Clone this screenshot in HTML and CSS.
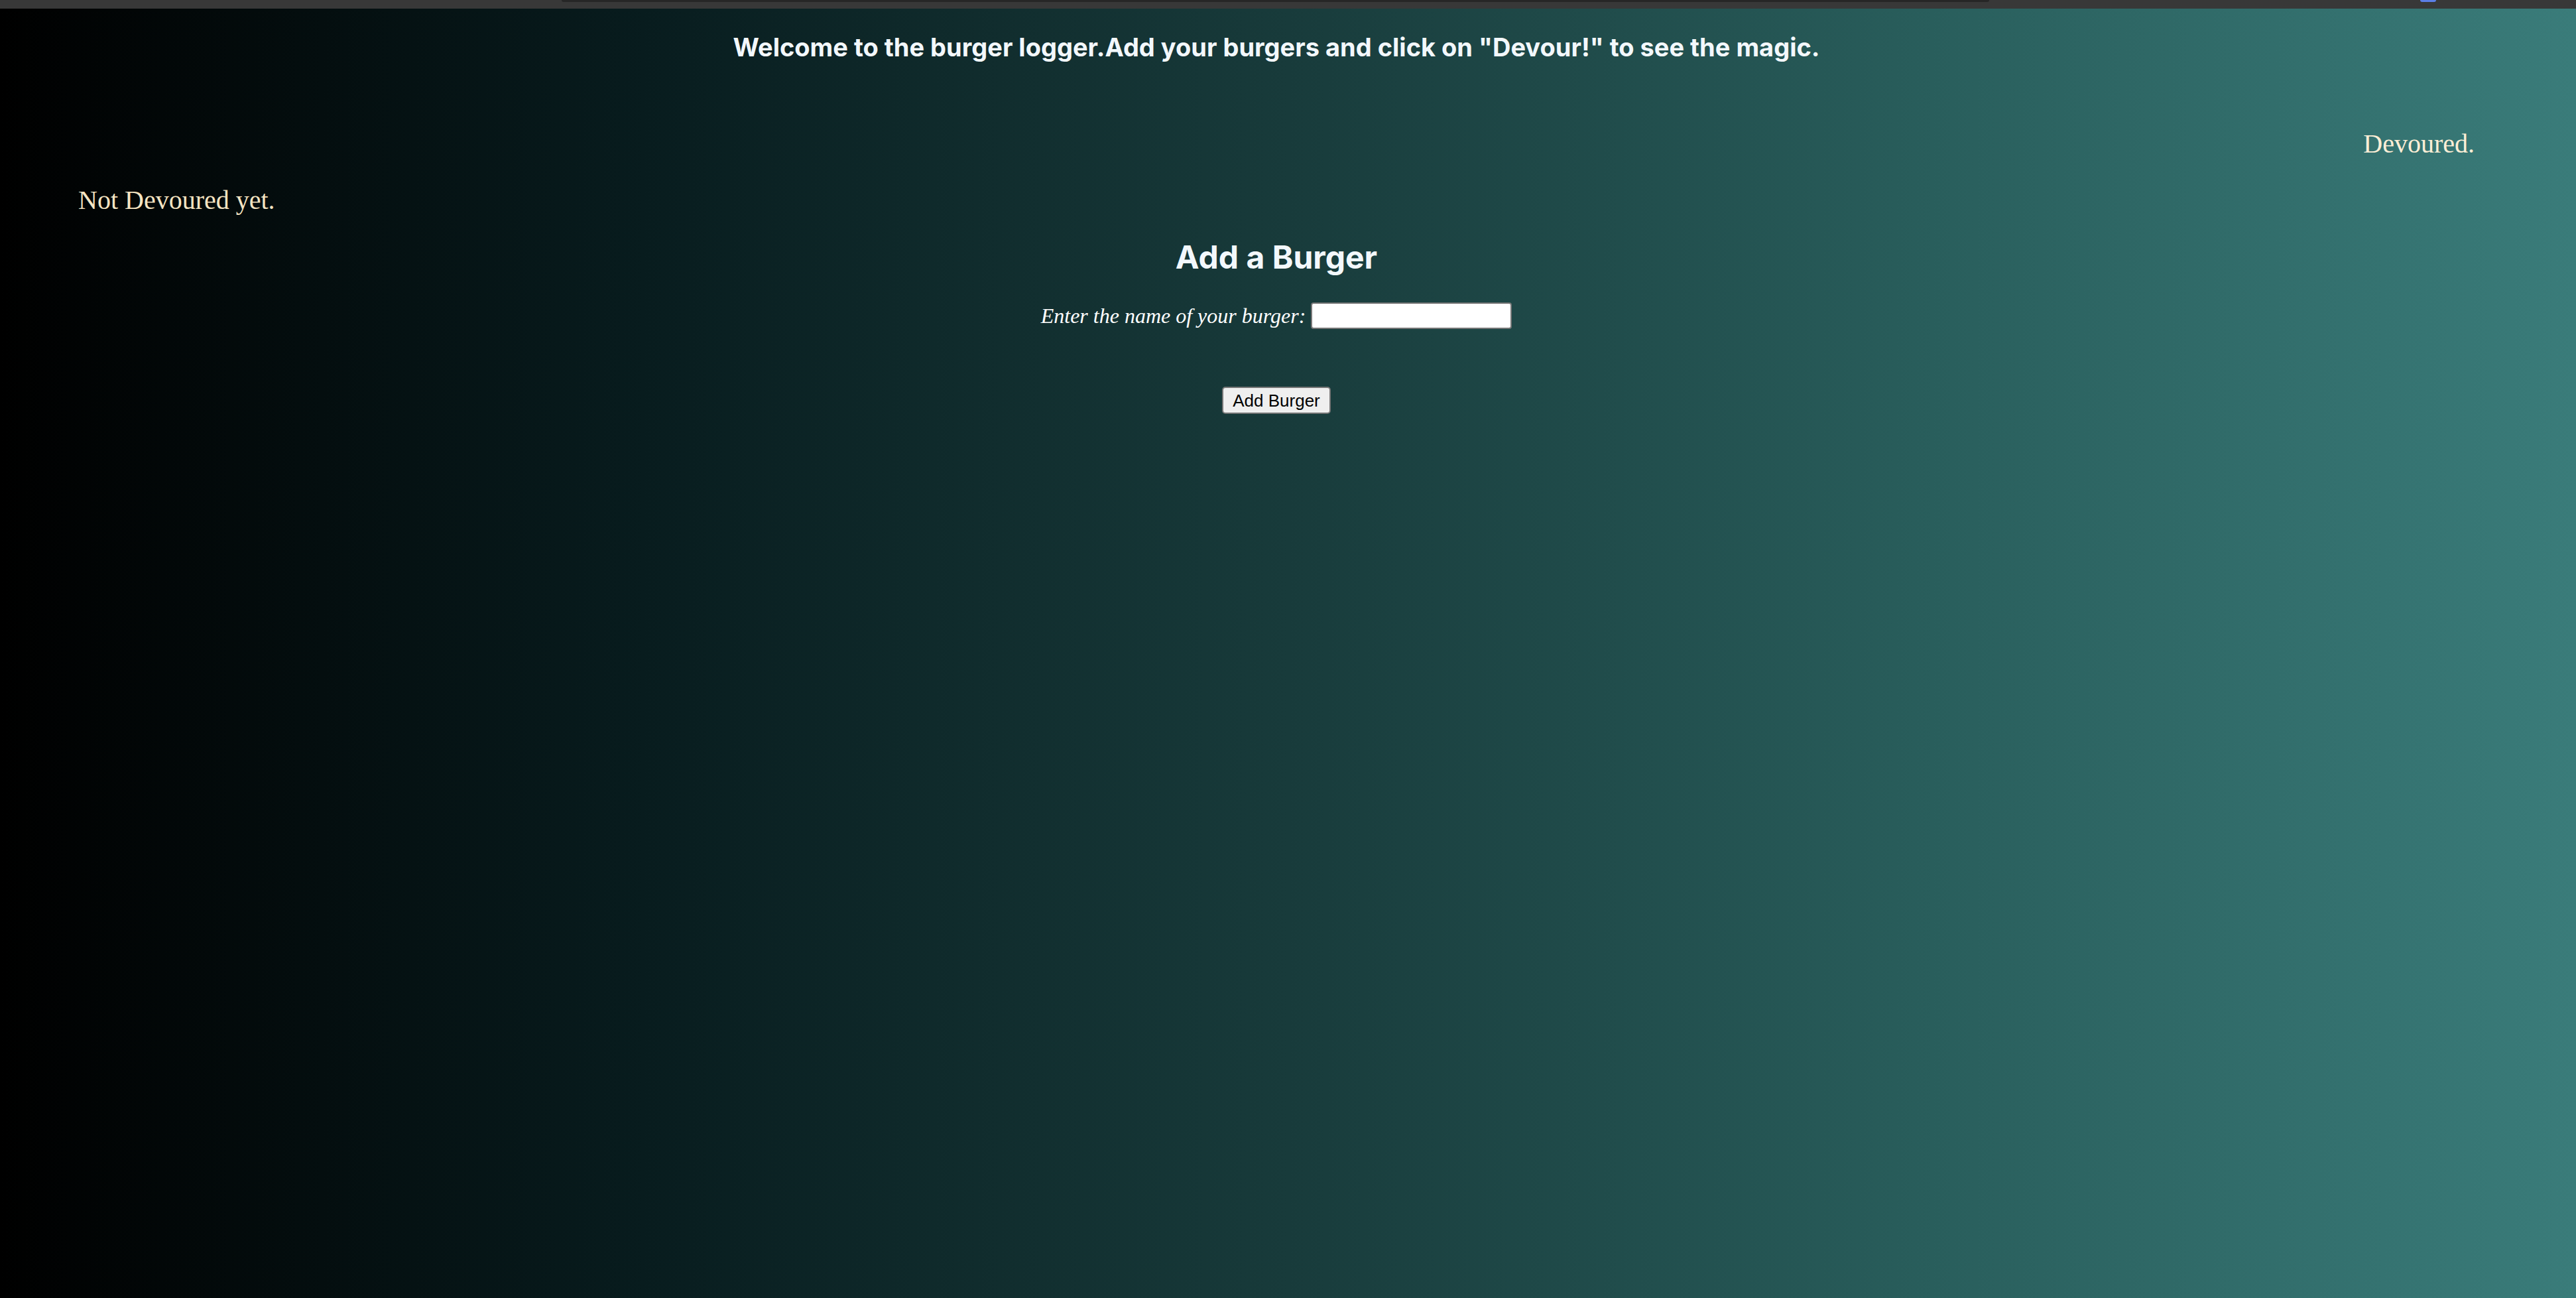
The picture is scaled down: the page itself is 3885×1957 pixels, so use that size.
FILE: index.html
```html
<!DOCTYPE html>
<html lang="en">
<head>
<meta charset="utf-8">
<title>Burger Logger</title>
<link rel="stylesheet" href="styles.css">
</head>
<body>
<div class="chrome">
  <div class="chrome-tab"></div>
  <div class="chrome-pill"></div>
</div>
<main class="page">
  <h1 class="welcome">Welcome to the burger logger.Add your burgers and click on "Devour!" to see the magic.</h1>
  <div class="lists">
    <div class="list devoured">Devoured.</div>
    <div class="list not-devoured">Not Devoured yet.</div>
  </div>
  <section class="add">
    <h2 class="add-title">Add a Burger</h2>
    <form class="add-form">
      <div class="field">
        <label class="field-label" for="burger">Enter the name of your burger:</label>
        <input class="field-input" id="burger" type="text">
      </div>
      <button class="add-btn" type="button">Add Burger</button>
    </form>
  </section>
</main>
</body>
</html>
```
FILE: styles.css
```css
html, body {
  margin: 0;
  padding: 0;
}
body {
  min-height: 1957px;
  background: linear-gradient(to right, #000000 0%, #081c1e 25%, #183b3b 50%, #295e5c 75%, #3a7c7a 100%);
  font-family: "Liberation Serif", serif;
  overflow: hidden;
}
.chrome {
  height: 13px;
  background: #383838;
  display: flex;
  align-items: flex-start;
}
.chrome-tab {
  margin-left: 847px;
  width: 2153px;
  height: 3px;
  background: #262626;
  border-radius: 0 0 4px 4px;
}
.chrome-pill {
  margin-left: 650px;
  width: 24px;
  height: 3px;
  background: #5b7fe6;
  border-radius: 0 0 6px 6px;
}
.page {
  margin-right: 35px;
  padding: 0 118px;
}
.welcome {
  margin: 35px 0 0;
  text-align: center;
  font-family: "Inter", "Liberation Sans", sans-serif;
  font-weight: 700;
  font-size: 38px;
  line-height: 46px;
  color: #f3f8fc;
}
.lists {
  display: flex;
  flex-direction: column;
}
.list {
  font-family: "Liberation Serif", serif;
  font-size: 40px;
  line-height: 48px;
}
.devoured {
  margin-top: 99px;
  text-align: right;
  color: #fdeed6;
}
.not-devoured {
  margin-top: 37px;
  color: #f5e4c2;
}
.add {
  text-align: center;
}
.add-title {
  margin: 33px 0 0;
  font-family: "Inter", "Liberation Sans", sans-serif;
  font-weight: 700;
  font-size: 48px;
  line-height: 58px;
  color: #f3f8fc;
}
.add-form {
  margin: 0;
}
.field {
  margin-top: 39px;
  display: flex;
  justify-content: center;
  align-items: center;
  gap: 8px;
}
.field-label {
  font-family: "Liberation Serif", serif;
  font-style: italic;
  font-size: 32px;
  line-height: 40px;
  color: #ffffff;
}
.field-input {
  box-sizing: border-box;
  width: 303px;
  height: 40px;
  margin: 0;
  border: 2px solid #767676;
  border-radius: 4px;
  background: #ffffff;
  padding: 2px 4px;
  font-size: 26px;
}
.add-btn {
  display: block;
  box-sizing: border-box;
  margin: 87px auto 0;
  width: 164px;
  height: 41px;
  padding: 0;
  border: 2px solid #767676;
  border-radius: 5px;
  background: #efefef;
  color: #000000;
  font-family: "Liberation Sans", Arial, sans-serif;
  font-size: 26px;
  line-height: 1;
}
```
